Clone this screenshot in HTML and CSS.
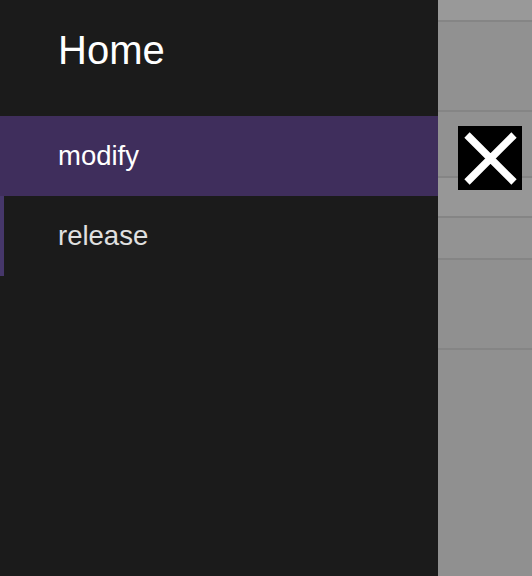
FILE: index.html
```html
<!DOCTYPE html>
<html>
<head>
<meta charset="utf-8">
<link rel="stylesheet" href="styles.css">
</head>
<body>
<div class="layout">
  <aside class="drawer">
    <div class="drawer-title">Home</div>
    <nav class="menu">
      <div class="menu-item active">modify</div>
      <div class="menu-item marked">release</div>
    </nav>
  </aside>
  <main class="backdrop">
    <div class="row r1"></div>
    <div class="row r2"></div>
    <div class="row r3"></div>
    <div class="row r4"></div>
    <div class="row r5"></div>
    <div class="row r6"></div>
    <div class="row r7"></div>
  </main>
  <button class="close" aria-label="close">
    <svg width="64" height="64" viewBox="0 0 64 64"><path d="M9 9 L56 56 M56 9 L9 56" stroke="#fff" stroke-width="7.5" fill="none"/></svg>
  </button>
</div>
</body>
</html>
```
FILE: styles.css
```css
html, body {
  margin: 0;
  padding: 0;
  height: 100%;
  overflow: hidden;
}
body {
  font-family: "Liberation Sans", Arial, sans-serif;
  background: #919191;
}
.layout {
  display: flex;
  height: 576px;
  position: relative;
}
.drawer {
  width: 438px;
  flex: none;
  background: #1b1b1b;
  display: flex;
  flex-direction: column;
}
.drawer-title {
  height: 116px;
  box-sizing: border-box;
  padding: 27px 0 0 58px;
  font-size: 40px;
  line-height: 46px;
  color: #ffffff;
}
.menu {
  display: flex;
  flex-direction: column;
}
.menu-item {
  height: 80px;
  display: flex;
  align-items: center;
  padding-left: 58px;
  font-size: 27.5px;
  color: #ffffff;
  box-sizing: border-box;
}
.menu-item.active {
  background: #3f2e5c;
}
.menu-item.marked {
  color: #e0e0e0;
  border-left: 4px solid #46376a;
  padding-left: 54px;
}
.backdrop {
  flex: 1;
  display: flex;
  flex-direction: column;
  background: #909090;
}
.row {
  box-sizing: border-box;
  border-bottom: 2px solid #858585;
}
.r1 { height: 22px; background: #999999; }
.r2 { height: 90px; background: #919191; }
.r3 { height: 66px; background: #919191; }
.r4 { height: 40px; background: #979797; }
.r5 { height: 42px; background: #939393; }
.r6 { height: 90px; background: #909090; }
.r7 { flex: 1; border-bottom: 0; background: #909090; }
.close {
  position: absolute;
  left: 458px;
  top: 126px;
  width: 64px;
  height: 64px;
  padding: 0;
  border: 0;
  background: #000;
  display: block;
}
.close svg { display: block; }
```
